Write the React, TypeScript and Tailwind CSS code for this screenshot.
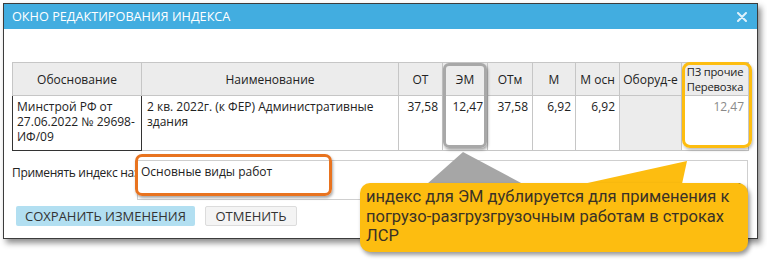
const cols = [129, 257, 44, 45, 45, 43, 44, 62, 67];

const headers = ['Обоснование', 'Наименование', 'ОТ', 'ЭМ', 'ОТм', 'М', 'М осн', 'Оборуд-е'];

const values = ['37,58', '12,47', '37,58', '6,92', '6,92'];

export default function App() {
  return (
    <div className="relative min-h-screen bg-white pl-[3px] pt-[3px] font-['Open_Sans',sans-serif] text-[#222]">
      {/* dialog */}
      <div className="flex h-[236px] w-[755px] flex-col border border-[#3c3c3c] bg-white shadow-[3px_4px_6px_rgba(0,0,0,0.45)]">
        <div className="flex h-[25px] items-center justify-between bg-[#42ade0] pl-[8px] pr-[10px]">
          <span className="text-[12.7px] leading-none text-white">ОКНО РЕДАКТИРОВАНИЯ ИНДЕКСА</span>
          <svg width="10" height="10" viewBox="0 0 10 10">
            <path d="M1 1 L9 9 M9 1 L1 9" stroke="#dff1fb" strokeWidth="2" strokeLinecap="round" />
          </svg>
        </div>

        <div className="px-[8px] pt-[33px] text-[12px]">
          <table className="table-fixed border-collapse">
            <colgroup>
              {cols.map((w, i) => (
                <col key={i} style={{ width: w }} />
              ))}
            </colgroup>
            <thead>
              <tr className="h-[33px] bg-[#ececec]">
                {headers.map((h) => (
                  <th key={h} className="border border-[#c6c6c6] p-0 text-center font-normal leading-[15px]">
                    {h}
                  </th>
                ))}
                <th className="whitespace-nowrap border border-[#c6c6c6] p-0 text-center text-[11.2px] font-normal leading-[15px] tracking-[-0.2px]">
                  ПЗ прочие
                  <br />
                  Перевозка
                </th>
              </tr>
            </thead>
            <tbody>
              <tr className="h-[55px] align-top">
                <td className="border-[1.5px] border-[#333] px-[4px] pt-[3px] leading-[15px]">
                  Минстрой РФ от 27.06.2022 № 29698-ИФ/09
                </td>
                <td className="border border-[#c6c6c6] px-[5px] pt-[3px] leading-[15px]">
                  2 кв. 2022г. (к ФЕР) Административные здания
                </td>
                {values.map((v, i) => (
                  <td key={i} className="border border-[#c6c6c6] px-[4px] pt-[3px] text-right leading-[15px]">
                    {v}
                  </td>
                ))}
                <td className="border border-[#c6c6c6] bg-[#ececec]" />
                <td className="border border-[#c6c6c6] px-[4px] pt-[3px] text-right leading-[15px] text-[#8a8a8a]">
                  12,47
                </td>
              </tr>
            </tbody>
          </table>

          <div className="mt-[9px] flex">
            <div className="relative z-10 w-[125px] whitespace-nowrap pt-[5px] leading-[15px] tracking-[-0.3px]">
              Применять индекс на:
            </div>
            <div className="relative h-[40px] w-[611px] border border-[#cfcfcf] bg-white pl-[3px] pt-[3px] leading-[15px]">
              Основные виды работ
              <span className="absolute right-[5px] top-[16px] text-[7px] text-[#333]">▼</span>
            </div>
          </div>

          <div className="ml-[4px] mt-[6px] flex gap-[10px] text-[13px]">
            <button className="h-[20px] w-[179px] rounded-[2px] bg-[#b2dff1] leading-none text-[#333]">
              СОХРАНИТЬ ИЗМЕНЕНИЯ
            </button>
            <button className="h-[20px] w-[92px] rounded-[2px] border border-[#dcdcdc] bg-[#f4f4f4] leading-none text-[#333]">
              ОТМЕНИТЬ
            </button>
          </div>
        </div>
      </div>

      {/* annotations */}
      <div className="absolute left-[443px] top-[63px] h-[85px] w-[44px] rounded-[6px] border-[3px] border-[#a8a8a8] shadow-[1px_2px_3px_rgba(0,0,0,0.35)]" />
      <div className="absolute left-[682px] top-[62px] h-[86px] w-[70px] rounded-[8px] border-[3px] border-[#fdbd10] shadow-[1px_2px_3px_rgba(0,0,0,0.25)]" />
      <div className="absolute left-[135px] top-[154px] z-20 h-[42px] w-[197px] rounded-[7px] border-[3px] border-[#e8731f] shadow-[1px_2px_3px_rgba(0,0,0,0.35)]" />

      <svg className="absolute left-0 top-0" width="767" height="267">
        <polygon points="427,184 463,152 523,184" fill="#a6a6a6" />
        <polygon points="583,184 687,161 682,184" fill="#fdbd10" />
      </svg>

      <div className="absolute left-[360px] top-[183px] h-[69px] w-[388px] rounded-[10px] bg-[#fdbd10] pl-[6px] pr-[10px] pt-[4px] font-['Roboto',sans-serif] text-[16.5px] leading-[19.5px] text-[#3a3226] shadow-[2px_3px_4px_rgba(0,0,0,0.4)]">
        индекс для ЭМ дублируется для применения к погрузо-разгрузгрузочным работам в строках ЛСР
      </div>
    </div>
  );
}
